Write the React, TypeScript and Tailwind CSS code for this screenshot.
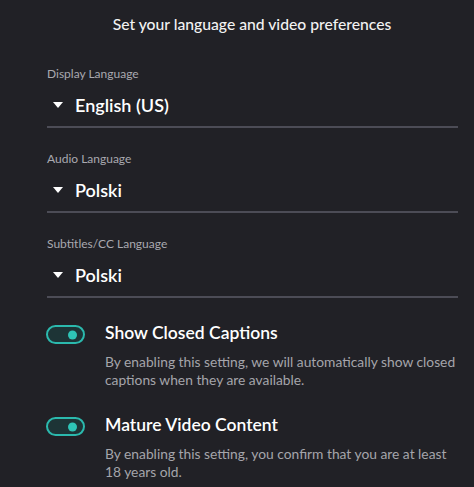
import { useState } from 'react';

const LANGUAGE_FIELDS = [
  { label: 'Display Language', value: 'English (US)' },
  { label: 'Audio Language', value: 'Polski' },
  { label: 'Subtitles/CC Language', value: 'Polski' },
];

const TOGGLES = [
  {
    title: 'Show Closed Captions',
    description:
      'By enabling this setting, we will automatically show closed captions when they are available.',
  },
  {
    title: 'Mature Video Content',
    description:
      'By enabling this setting, you confirm that you are at least 18 years old.',
  },
];

function Caret() {
  return (
    <svg className="w-[10px] h-[6px] shrink-0" viewBox="0 0 10 6" fill="currentColor">
      <path d="M0 0h10L5 6z" />
    </svg>
  );
}

function Toggle({ on, onClick }: { on: boolean; onClick: () => void }) {
  return (
    <button
      onClick={onClick}
      className={`relative w-[39px] h-[19px] shrink-0 rounded-full border-2 border-[#2bb9ad] ${
        on ? 'bg-[#1d3436]' : 'bg-transparent'
      }`}
    >
      <span
        className={`absolute top-1/2 -translate-y-1/2 w-[9px] h-[9px] rounded-full bg-[#2ec4b6] ${
          on ? 'right-[6px]' : 'left-[6px]'
        }`}
      />
    </button>
  );
}

export default function App() {
  const [toggles, setToggles] = useState([true, true]);

  return (
    <div
      className="w-[474px] h-[487px] overflow-hidden bg-[#212126] text-white"
      style={{ fontFamily: 'Lato, "Open Sans", sans-serif' }}
    >
      <h1 className="pt-[13px] pl-[30px] text-center text-[15.7px] leading-[22px] font-medium text-[#f2f2f2]">
        Set your language and video preferences
      </h1>

      <div className="pl-[47px] pr-[16px] pt-[31px]">
        {LANGUAGE_FIELDS.map((field) => (
          <div key={field.label} className="mb-[23px]">
            <p className="text-[12px] leading-[16px] text-[#a9a9b0]">{field.label}</p>
            <div className="flex items-center gap-[12px] pl-[6px] pt-[11px] pb-[9px] border-b-2 border-[#4c4c56]">
              <Caret />
              <span className="text-[18px] leading-[24px] font-semibold">{field.value}</span>
            </div>
          </div>
        ))}
      </div>

      <div className="pl-[46px] flex flex-col gap-[24px]">
        {TOGGLES.map((t, i) => (
          <div key={t.title} className="flex items-start gap-[20px]">
            <div className="pt-[3px]">
              <Toggle
                on={toggles[i]}
                onClick={() => setToggles((prev) => prev.map((v, j) => (j === i ? !v : v)))}
              />
            </div>
            <div className="w-[355px]">
              <p className="text-[17.5px] leading-[24px] font-semibold">{t.title}</p>
              <p className="mt-[8px] text-[13.8px] leading-[18px] text-[#a5a5ab]">{t.description}</p>
            </div>
          </div>
        ))}
      </div>
    </div>
  );
}
